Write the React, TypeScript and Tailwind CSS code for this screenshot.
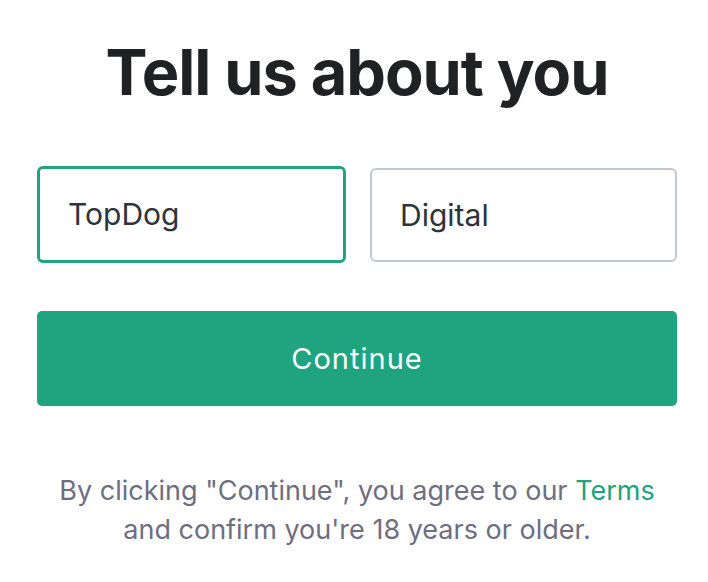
import React from 'react';

export default function App() {
  return (
    <div
      className="min-h-[582px] w-[708px] bg-white"
      style={{ fontFamily: 'Inter, "Noto Sans", sans-serif' }}
    >
      <div className="ml-[37px] flex w-[640px] flex-col pt-[35px]">
        <h1 className="text-center text-[63px] font-bold leading-[74px] tracking-[-1px] text-[#202123]">
          Tell us about you
        </h1>

        <div className="mt-[57px] flex gap-[24px]">
          <div className="flex h-[97px] w-[309px] items-center rounded-[6px] border-[3px] border-[#20a37f] pl-[28px]">
            <span className="text-[30px] text-[#2d333a]">TopDog</span>
          </div>
          <div className="mt-[2px] flex h-[94px] w-[307px] items-center rounded-[6px] border-[2px] border-[#c2c8d0] pl-[28px]">
            <span className="text-[30px] text-[#2d333a]">Digital</span>
          </div>
        </div>

        <button className="mt-[48px] flex h-[95px] w-[640px] items-center justify-center rounded-[5px] bg-[#20a37f] text-[29px] tracking-[1px] text-white">
          Continue
        </button>

        <p className="mt-[65px] text-center text-[27px] leading-[39px] text-[#6e6e80]">
          By clicking "Continue", you agree to our <span className="text-[#20a37f]">Terms</span>
          <br />
          and confirm you're 18 years or older.
        </p>
      </div>
    </div>
  );
}
